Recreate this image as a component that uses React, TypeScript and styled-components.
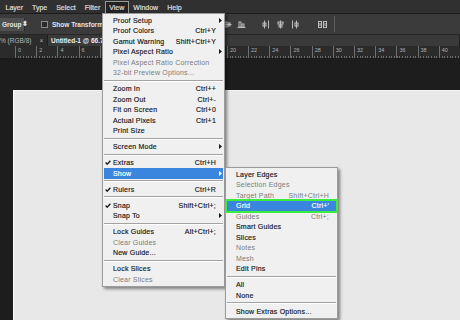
import React from "react";
import styled, { createGlobalStyle } from "styled-components";

const GlobalStyle = createGlobalStyle`
  html, body {
    margin: 0;
    padding: 0;
  }

  body {
    width: 460px;
    height: 320px;
    overflow: hidden;
    background: #1e1e1e;
    font-family: "Liberation Sans", Arial, sans-serif;
  }
`;

const Screen = styled.div`
  position: relative;
  width: 460px;
  height: 320px;
  display: flex;
  flex-direction: column;
  background: #1e1e1e;
  overflow: hidden;
`;

const MenuBar = styled.div`
  height: 13px;
  display: flex;
  align-items: flex-end;
  padding-left: 1px;
  background: #303030;
  border-bottom: 1px solid #1c1c1c;
`;

const MenuTitle = styled.div<{ $open?: boolean }>`
  height: 11px;
  padding: 0 3.5px;
  display: flex;
  align-items: center;
  border: 1px solid ${(p) => (p.$open ? "#9a9a9a" : "transparent")};
  border-bottom: none;
  background: ${(p) => (p.$open ? "#232323" : "transparent")};
  color: #dcdcdc;
  font-size: 7px;
  -webkit-text-stroke: 0.2px #dcdcdc;
`;

const OptionsBar = styled.div`
  height: 20px;
  display: flex;
  align-items: center;
  background: #3b3b3b;
  border-bottom: 1px solid #262626;
  color: #e4e4e4;
  font-size: 6.5px;
`;

const GroupSelect = styled.div`
  width: 25px;
  height: 13px;
  display: flex;
  align-items: center;
  justify-content: space-between;
  padding: 0 2px;
  box-sizing: border-box;
  background: #505050;
  border-right: 1px solid #2a2a2a;
  font-weight: bold;
`;

const CheckBox = styled.div`
  width: 5px;
  height: 5px;
  margin: 0 4px 0 16px;
  background: #2b2b2b;
  border: 1px solid #8a8a8a;
`;

const OptionLabel = styled.span`
  font-weight: bold;
  white-space: nowrap;
`;

const AlignIcons = styled.div`
  display: flex;
  align-items: center;
  gap: 5px;
  margin-left: auto;
  color: #bdbdbd;
`;

const IconGap = styled.span<{ $w: number }>`
  width: ${(p) => p.$w}px;
`;

const VSep = styled.div`
  width: 1px;
  height: 16px;
  margin: 0 125px 0 6px;
  background: #5c5c5c;
`;

const TabBar = styled.div`
  height: 11px;
  display: flex;
  align-items: stretch;
  background: #282828;
  font-size: 6.5px;
`;

const Tab = styled.div<{ $current?: boolean }>`
  display: flex;
  align-items: center;
  gap: 8px;
  padding: 0 4px 0 ${(p) => (p.$current ? 3 : 0)}px;
  width: ${(p) => (p.$current ? "auto" : "43px")};
  flex: ${(p) => (p.$current ? 1 : "none")};
  background: ${(p) => (p.$current ? "#3a3a3a" : "#2c2c2c")};
  border-right: 1px solid #1f1f1f;
  color: ${(p) => (p.$current ? "#f0f0f0" : "#b4b4b4")};
  font-weight: ${(p) => (p.$current ? "bold" : "normal")};
  white-space: nowrap;
`;

const Ruler = styled.div`
  height: 12px;
  display: flex;
  padding-left: 15px;
  background: #2b2b2b
    repeating-linear-gradient(to right, #6c6c6c 0 1px, transparent 1px 2.65px)
    15px 100% / 100% 2px no-repeat;
  border-bottom: 1px solid #1a1a1a;
  overflow: hidden;
`;

const RulerCell = styled.div`
  flex: none;
  width: 21.2px;
  box-sizing: border-box;
  border-left: 1px solid #6e6e6e;
  padding: 1px 0 0 2px;
  color: #b0b0b0;
  font-size: 5.5px;
`;

const CanvasArea = styled.div`
  flex: 1;
  display: flex;
  padding: 31px 0 0 13px;
  background: #1d1d1d;
`;

const Document = styled.div`
  flex: 1;
  background: #e8e8e8;
  border-left: 1px solid #fbfbfb;
  border-top: 1px solid #f4f4f4;
`;

const Dropdown = styled.div<{ $left: number; $top: number; $width: number }>`
  position: absolute;
  left: ${(p) => p.$left}px;
  top: ${(p) => p.$top}px;
  width: ${(p) => p.$width}px;
  box-sizing: border-box;
  display: flex;
  flex-direction: column;
  padding: 1px;
  background: #f0f0f0;
  border: 1px solid #9b9b9b;
  box-shadow: 2px 2px 3px rgba(0, 0, 0, 0.45);
  font-size: 7px;
  letter-spacing: 0.2px;
`;

const Item = styled.div<{ $active?: boolean; $disabled?: boolean; $boxed?: boolean }>`
  height: 10.5px;
  display: grid;
  grid-template-columns: 9px 1fr auto 7px;
  align-items: center;
  background: ${(p) => (p.$active ? "#3a86df" : "transparent")};
  color: ${(p) => (p.$active ? "#ffffff" : p.$disabled ? "#7c7c7c" : "#151515")};
  outline: ${(p) => (p.$boxed ? "2px solid #3cee3c" : "none")};
  white-space: nowrap;
  -webkit-text-stroke: ${(p) => (p.$disabled ? "0px" : "0.15px")};
`;

const CheckCell = styled.span`
  display: flex;
  justify-content: center;
  padding-right: 2px;
`;

const ArrowCell = styled.span`
  display: flex;
  justify-content: center;
  padding-left: 1px;
`;

const Separator = styled.div`
  height: 5.5px;
  display: flex;
  flex-direction: column;
  justify-content: center;

  &::before {
    content: "";
    height: 1px;
    background: #a3a3a3;
  }

  &::after {
    content: "";
    height: 1px;
    background: #ffffff;
  }
`;

type Entry =
  | "sep"
  | {
      label: string;
      shortcut?: string;
      sub?: boolean;
      check?: boolean;
      disabled?: boolean;
      active?: boolean;
      boxed?: boolean;
    };

const viewMenu: Entry[] = [
  { label: "Proof Setup", sub: true },
  { label: "Proof Colors", shortcut: "Ctrl+Y" },
  { label: "Gamut Warning", shortcut: "Shift+Ctrl+Y" },
  { label: "Pixel Aspect Ratio", sub: true },
  { label: "Pixel Aspect Ratio Correction", disabled: true },
  { label: "32-bit Preview Options...", disabled: true },
  "sep",
  { label: "Zoom In", shortcut: "Ctrl++" },
  { label: "Zoom Out", shortcut: "Ctrl+-" },
  { label: "Fit on Screen", shortcut: "Ctrl+0" },
  { label: "Actual Pixels", shortcut: "Ctrl+1" },
  { label: "Print Size" },
  "sep",
  { label: "Screen Mode", sub: true },
  "sep",
  { label: "Extras", shortcut: "Ctrl+H", check: true },
  { label: "Show", sub: true, active: true },
  "sep",
  { label: "Rulers", shortcut: "Ctrl+R", check: true },
  "sep",
  { label: "Snap", shortcut: "Shift+Ctrl+;", check: true },
  { label: "Snap To", sub: true },
  "sep",
  { label: "Lock Guides", shortcut: "Alt+Ctrl+;" },
  { label: "Clear Guides", disabled: true },
  { label: "New Guide..." },
  "sep",
  { label: "Lock Slices" },
  { label: "Clear Slices", disabled: true },
];

const showMenu: Entry[] = [
  { label: "Layer Edges" },
  { label: "Selection Edges", disabled: true },
  { label: "Target Path", shortcut: "Shift+Ctrl+H", disabled: true },
  { label: "Grid", shortcut: "Ctrl+'", active: true, boxed: true },
  { label: "Guides", shortcut: "Ctrl+;", disabled: true },
  { label: "Smart Guides" },
  { label: "Slices" },
  { label: "Notes", disabled: true },
  { label: "Mesh", disabled: true },
  { label: "Edit Pins" },
  "sep",
  { label: "All" },
  { label: "None" },
  "sep",
  { label: "Show Extras Options..." },
];

const menuTitles = ["Layer", "Type", "Select", "Filter", "View", "Window", "Help"];

const Check = () => (
  <svg width="6" height="5" viewBox="0 0 6 5">
    <path d="M0.6 2.5 L2.2 4.2 L5.4 0.7" fill="none" stroke="currentColor" strokeWidth="1.3" />
  </svg>
);

const Arrow = () => (
  <svg width="3" height="5" viewBox="0 0 3 5">
    <polygon points="0,0 3,2.5 0,5" fill="currentColor" />
  </svg>
);

const AlignIcon = ({ kind }: { kind: number }) => (
  <svg width="9" height="9" viewBox="0 0 9 9" stroke="currentColor" strokeWidth="1" fill="none">
    {kind === 0 && (
      <>
        <path d="M1 2.5h7M1 6.5h7" />
        <path d="M3 1v3M6 5v3" />
      </>
    )}
    {kind === 1 && (
      <>
        <path d="M0.5 4.5h8" />
        <rect x="2" y="2" width="2" height="5" />
        <rect x="5" y="3" width="2" height="3" />
      </>
    )}
    {kind === 2 && (
      <>
        <path d="M0.5 7.5h8" />
        <rect x="2" y="2" width="2" height="5" />
        <rect x="5" y="4" width="2" height="3" />
      </>
    )}
    {kind === 3 && (
      <>
        <path d="M2.5 0.5v8M6.5 0.5v8" />
        <rect x="1" y="3" width="3" height="3" />
      </>
    )}
    {kind === 4 && (
      <>
        <path d="M4.5 0.5v8" />
        <rect x="2" y="2" width="5" height="2" />
        <rect x="3" y="5" width="3" height="2" />
      </>
    )}
    {kind === 5 && (
      <>
        <path d="M2.5 0.5v8M6.5 0.5v8" />
        <rect x="5" y="3" width="3" height="3" />
      </>
    )}
  </svg>
);

const AutoAlignIcon = () => (
  <svg width="11" height="9" viewBox="0 0 11 9" stroke="currentColor" strokeWidth="1" fill="none">
    <rect x="1.5" y="1.5" width="3" height="6" />
    <rect x="6.5" y="1.5" width="3" height="6" />
    <path d="M3 3v3M8 3v3" />
  </svg>
);

const Menu = ({ entries, left, top, width }: { entries: Entry[]; left: number; top: number; width: number }) => (
  <Dropdown $left={left} $top={top} $width={width}>
    {entries.map((e, i) =>
      e === "sep" ? (
        <Separator key={i} />
      ) : (
        <Item key={i} $active={e.active} $disabled={e.disabled} $boxed={e.boxed}>
          <CheckCell>{e.check && <Check />}</CheckCell>
          <span>{e.label}</span>
          <span>{e.shortcut}</span>
          <ArrowCell>{e.sub && <Arrow />}</ArrowCell>
        </Item>
      )
    )}
  </Dropdown>
);

export default function App() {
  const rulerMarks = Array.from({ length: 21 }, (_, i) => i * 2);

  return (
    <>
      <GlobalStyle />
      <Screen>
        <MenuBar>
          {menuTitles.map((t) => (
            <MenuTitle key={t} $open={t === "View"}>
              {t}
            </MenuTitle>
          ))}
        </MenuBar>

        <OptionsBar>
          <GroupSelect>
            <span>Group</span>
            <span>⬍</span>
          </GroupSelect>
          <CheckBox />
          <OptionLabel>Show Transform Controls</OptionLabel>
          <AlignIcons>
            <AlignIcon kind={0} />
            <AlignIcon kind={1} />
            <AlignIcon kind={2} />
            <IconGap $w={6} />
            <AlignIcon kind={3} />
            <AlignIcon kind={4} />
            <AlignIcon kind={5} />
            <IconGap $w={8} />
            <AutoAlignIcon />
          </AlignIcons>
          <VSep />
        </OptionsBar>

        <TabBar>
          <Tab>
            <span>% (RGB/8)</span>
            <span>×</span>
          </Tab>
          <Tab $current>Untitled-1 @ 66.7% (RGB/8)</Tab>
        </TabBar>

        <Ruler>
          {rulerMarks.map((n) => (
            <RulerCell key={n}>{n}</RulerCell>
          ))}
        </Ruler>

        <CanvasArea>
          <Document />
        </CanvasArea>

        <Menu entries={viewMenu} left={102} top={13} width={123} />
        <Menu entries={showMenu} left={225} top={167} width={113} />
      </Screen>
    </>
  );
}
